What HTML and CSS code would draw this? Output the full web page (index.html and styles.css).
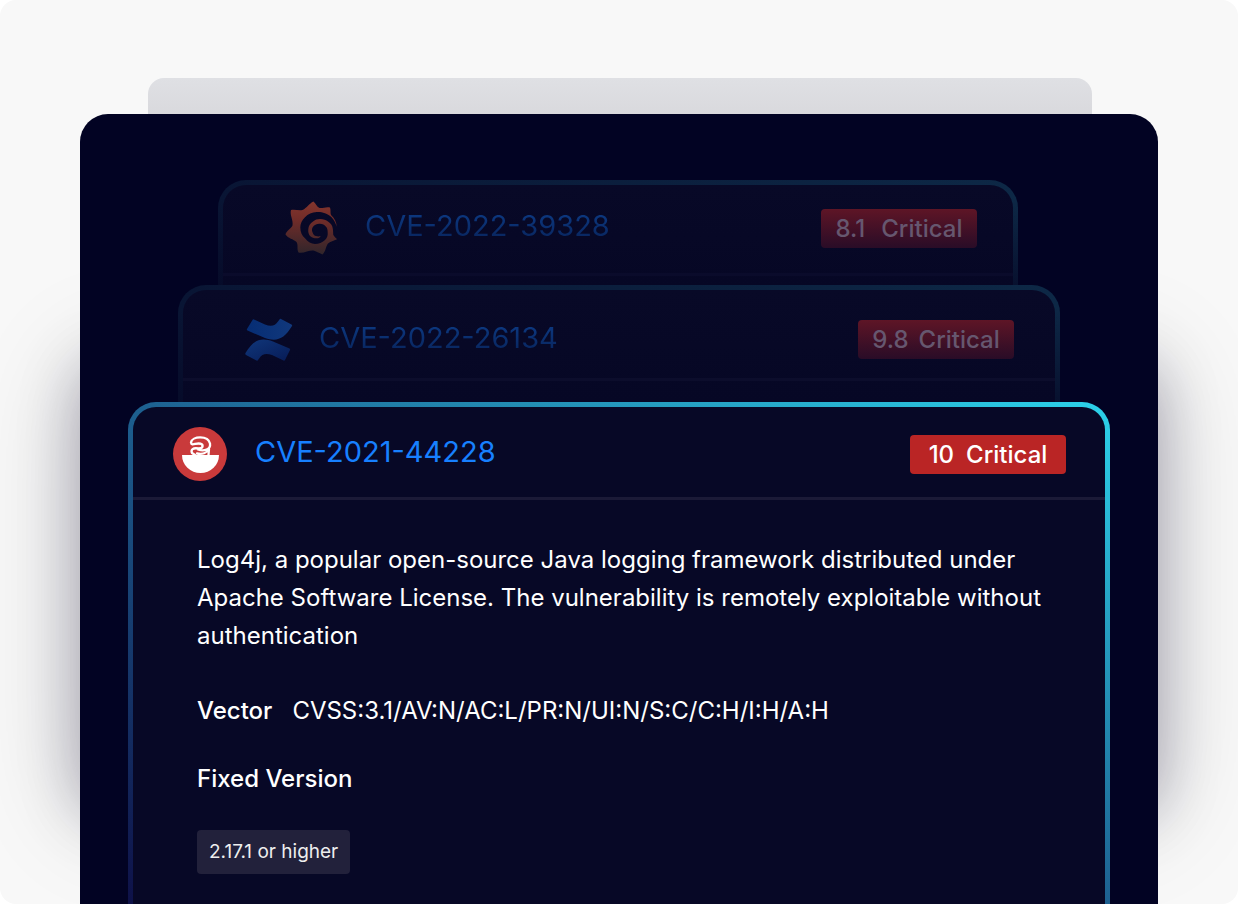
FILE: index.html
```
<!DOCTYPE html>
<html lang="en">
  <head>
    <meta charset="UTF-8">
    <meta name="viewport" content="width=device-width, initial-scale=1">
    <title>Critical vulnerabilities</title>
    <link rel="stylesheet" href="styles.css">
  </head>
  <body>
    <main class="stage">
      <div class="backdrop"></div>
      <div class="panel">
        <article class="card card-far">
          <header class="card-header">
            <svg class="icon" viewBox="0 0 54 54" aria-hidden="true">
              <defs>
                <linearGradient id="flame" x1="0" y1="0" x2="0" y2="1">
                  <stop offset="0" stop-color="#84352D"/>
                  <stop offset="0.35" stop-color="#702C29"/>
                  <stop offset="1" stop-color="#30252B"/>
                </linearGradient>
              </defs>
              <path fill="url(#flame)" d="M28.500 0.500C31 2.500 31.500 5.500 34.500 7C38 7.500 41 5.500 45 6.500C46 9 45 12 46 14C49.500 17 51.500 21 51.700 25.700C50.500 22 49.500 20 48 18C46 15 43 13.500 40 12.300C37 11 34 10.700 31.700 11C27 11.200 23 13 20 16.300C17 19 15.300 23 15.300 26.300C15.300 31 17 35 20 37.300C23 41 26 42.700 30 43C34 43 37 41.500 40 39C42 37 43 34.500 42.700 31.700C42.700 29 42.300 27 41 25.700C39.500 23.500 37 22.500 34.300 22.700C31.500 22.800 29 24 27.700 26.300C26.700 28 26.700 30 27.700 31.700C28.300 33.500 29.500 34.700 31 35C32.500 35.500 34 35.500 35.700 35C35 36.700 33.500 37.300 31.700 37.300C29 37.300 26.700 36.700 25 35C23.500 33 23 31 23.300 28.300C23.500 25 25 22.500 27.700 20.700C30 18.700 32.500 18 35 18C38.500 18 41 19 43.300 20.700C46 22.500 47.500 24.700 47.700 27.300C48.300 29.500 48 32 48.300 34C49.500 36 51 37 52 38.300C49 40 45 40.500 43 42.500C40.500 46 41 50 37.500 53.500C34 52 31 50 28.500 49.500C24 49 19 52.500 13.500 51.500C11.500 48 13.500 44 11.500 41C8.500 38 3 37.500 0.500 33.500C1.500 29.500 6 28 7.500 24.500C8.500 19 4.500 14 6 9C10 8 14 10 17.500 9C22 7 24 2.500 28.500 0.500Z"/>
            </svg>
            <a class="cve" href="#cve-2022-39328">CVE-2022-39328</a>
            <span class="badge"><span>8.1</span><span>Critical</span></span>
          </header>
        </article>
        <article class="card card-mid">
          <header class="card-header">
            <svg class="icon" viewBox="0 -2 48 52" aria-hidden="true">
              <defs>
                <linearGradient id="waveTop" x1="0" y1="0" x2="1" y2="0">
                  <stop offset="0" stop-color="#062D74"/>
                  <stop offset="1" stop-color="#11387C"/>
                </linearGradient>
                <linearGradient id="waveBottom" x1="0" y1="0" x2="1" y2="1">
                  <stop offset="0" stop-color="#10377B"/>
                  <stop offset="1" stop-color="#071B56"/>
                </linearGradient>
              </defs>
              <path fill="url(#waveTop)" d="M7.500 4Q8 3 9 3.500L20 8.500Q29 12 33 5.500L34.500 3.500Q35 2.500 36 3L46.500 8.500Q47.500 9 47 10C39 23 32 26 20 22L2.500 14.500Q1.500 14 2 13Z"/>
              <path fill="url(#waveBottom)" d="M.5 37C8 24 16 21 28 25.500L44.500 32.500Q45.500 33 45 34L40 44Q39.500 45 38.500 44.500L27 39Q18 36 14.500 42L13 44Q12.500 45 11.500 44.500L1 39Q0 38 .5 37Z"/>
            </svg>
            <a class="cve" href="#cve-2022-26134">CVE-2022-26134</a>
            <span class="badge"><span>9.8</span><span>Critical</span></span>
          </header>
        </article>
        <article class="card card-front">
          <header class="card-header">
            <svg class="icon" viewBox="0 0 54 54" aria-hidden="true">
              <circle cx="27" cy="27" r="27" fill="#C93A3B"/>
              <path fill="#FFF" d="M9 28H46A18.500 18 0 0 1 9 28Z"/>
              <path fill="none" stroke="#FFF" stroke-width="2.300" stroke-linecap="round" stroke-linejoin="round" d="M18 15.500C19 9 35 8 37 16.500C38 22.500 31 24.500 25 22.500M18 15.500C18.500 19 22 16.500 25.500 16.500C31 16.500 31 21.500 25.500 21.500C20 20.500 17.500 22.500 19 26L22 28M24 26.500C29 27.500 34 26 36 22L35.500 28"/>
            </svg>
            <a class="cve" href="#cve-2021-44228">CVE-2021-44228</a>
            <span class="badge"><span>10</span><span>Critical</span></span>
          </header>
          <div class="card-body">
            <p class="description">Log4j, a popular open-source Java logging framework distributed under Apache Software License. The vulnerability is remotely exploitable without authentication</p>
            <dl class="details">
              <div class="detail">
                <dt>Vector</dt>
                <dd>CVSS:3.1/AV:N/AC:L/PR:N/UI:N/S:C/C:H/I:H/A:H</dd>
              </div>
              <div class="detail detail-stacked">
                <dt>Fixed Version</dt>
                <dd><span class="tag">2.17.1 or higher</span></dd>
              </div>
            </dl>
          </div>
        </article>
      </div>
    </main>
  </body>
</html>
```
FILE: styles.css
```
* {
  box-sizing: border-box;
}
body {
  margin: 0;
  background-color: #FFF;
  font-family: Inter, "Liberation Sans", sans-serif;
  color: #FFF;
}
.stage {
  position: relative;
  z-index: 0;
  display: flex;
  flex-direction: column;
  min-height: 100vh;
  padding: 78px 80px 0;
  overflow: hidden;
  border-radius: 16px;
  background-color: #F8F8F8;
}
.backdrop {
  height: 36px;
  margin: 0 66px 0 68px;
  border-radius: 16px 16px 0 0;
  background: linear-gradient(#DFE0E4, #D9D9DD);
}
.panel {
  position: relative;
  display: flex;
  flex: 1;
  flex-direction: column;
  padding: 66px 48px 0;
  border-radius: 28px 28px 0 0;
  background-color: #020323;
}
/* soft shadow that fades out towards both ends of the panel */
.panel::before {
  content: "";
  position: absolute;
  z-index: -1;
  inset: 250px 0 90px;
  border-radius: 28px;
  box-shadow:
    0 0 60px 0 rgba(10, 8, 40, 0.26),
    0 0 110px 0 rgba(10, 10, 30, 0.2);
}
.card {
  border: 5px solid transparent;
  border-bottom: 0;
  border-radius: 28px 28px 0 0;
}
.card-far,
.card-mid {
  background:
    linear-gradient(#080927, #060725) padding-box,
    linear-gradient(to bottom, rgba(5, 7, 37, 0) 20%, rgba(5, 7, 37, 0.7)) border-box,
    linear-gradient(to right, #091534, #0D2846) border-box;
}
.card-far {
  height: 105px;
  margin: 0 92px 0 90px;
}
.card-mid {
  height: 117px;
  margin: 0 50px;
}
.card-front {
  flex: 1;
  background:
    linear-gradient(#070826, #070826) padding-box,
    linear-gradient(to bottom left, #2CD2EA, #1D6090 50%, #0E1148) border-box;
}
.card-header {
  display: flex;
  align-items: center;
  border-bottom: 3px solid #1B1A37;
}
.card-far .card-header {
  height: 91px;
  padding: 0 36px 2px 62px;
  border-color: #0A0B2B;
}
.card-mid .card-header {
  height: 91px;
  padding: 11px 41px 0 62px;
  border-color: #0C0D2C;
}
.card-front .card-header {
  height: 93px;
  padding: 4px 39px 0 40px;
}
.icon {
  flex: none;
  width: 54px;
  height: 54px;
}
.card-mid .icon {
  width: 48px;
  height: 52px;
}
.cve {
  margin: 0 0 4px 28px;
  font-size: 29px;
  line-height: 36px;
  text-decoration: none;
  color: #1780FF;
}
.card-far .cve,
.card-mid .cve {
  margin-left: 26px;
  color: transparent;
  background: linear-gradient(#0D3C87, #082258);
  background-clip: text;
}
.badge {
  display: flex;
  align-items: center;
  justify-content: center;
  gap: 12px;
  width: 156px;
  height: 39px;
  margin-left: auto;
  border-radius: 4px;
  background-color: #BA2525;
  font-size: 24px;
  font-weight: 500;
}
.card-far .badge,
.card-mid .badge {
  background: linear-gradient(#5E1526, #290C27);
  color: #66576F;
}
.card-far .badge {
  gap: 16px;
}
.card-mid .badge {
  gap: 10px;
}
.card-body {
  padding: 41px 60px 28px 64px;
}
.description {
  margin: 0;
  font-size: 24px;
  line-height: 38px;
}
.details {
  display: flex;
  flex-direction: column;
  gap: 30px;
  margin: 37px 0 0;
  font-size: 24px;
  line-height: 38px;
}
.detail {
  display: flex;
  gap: 20px;
}
.detail-stacked {
  flex-direction: column;
  gap: 32px;
}
.details dt {
  font-weight: 500;
}
.details dd {
  margin: 0;
}
.tag {
  display: inline-block;
  padding: 4px 12px;
  border-radius: 4px;
  background-color: #22213B;
  color: #EEE;
  font-size: 19px;
  line-height: 36px;
}
```
